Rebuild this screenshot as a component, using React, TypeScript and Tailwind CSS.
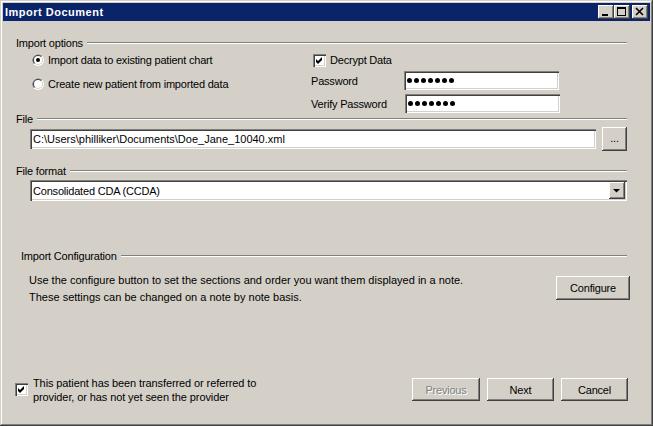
import React from 'react';

const raised =
  'bg-[#d4d0c8] shadow-[inset_-1px_-1px_#404040,inset_1px_1px_#ffffff,inset_-2px_-2px_#808080,inset_2px_2px_#d4d0c8]';
const sunken =
  'bg-white shadow-[inset_1px_1px_#808080,inset_2px_2px_#404040,inset_-1px_-1px_#ffffff,inset_-2px_-2px_#d4d0c8]';

const Radio = ({ checked }: { checked?: boolean }) => (
  <svg width="12" height="12" viewBox="0 0 12 12" className="shrink-0">
    <circle cx="6" cy="6" r="6" fill="#ffffff" />
    <path d="M1.76 10.24 A6 6 0 0 1 10.24 1.76 Z" fill="#808080" />
    <circle cx="6" cy="6" r="5" fill="#d4d0c8" />
    <path d="M2.46 9.54 A5 5 0 0 1 9.54 2.46 Z" fill="#404040" />
    <circle cx="6" cy="6" r="4" fill="#ffffff" />
    {checked && <circle cx="6" cy="6" r="2" fill="#000000" />}
  </svg>
);

const Checkbox = ({ checked }: { checked?: boolean }) => (
  <div className={`w-[13px] h-[13px] shrink-0 flex items-center justify-center ${sunken}`}>
    {checked && (
      <svg width="13" height="13" viewBox="0 0 13 13">
        <path d="M3 5 L5 7 L9 3 L9 6 L5 10 L3 8 Z" fill="#000000" />
      </svg>
    )}
  </div>
);

const GroupHeader = ({ label, className = '' }: { label: string; className?: string }) => (
  <div className={`flex items-center h-[12px] ${className}`}>
    <span className="whitespace-nowrap">{label}</span>
    <div className="flex-1 ml-[4px] h-[2px] border-t border-b border-t-[#808080] border-b-white" />
  </div>
);

const Dots = () => (
  <div className="flex gap-[2px] pl-[3px]">
    {[0, 1, 2, 3, 4, 5, 6].map((i) => (
      <span key={i} className="w-[5px] h-[5px] rounded-full bg-black" />
    ))}
  </div>
);

export default function App() {
  return (
    <div className="w-[653px] h-[426px] bg-[#d4d0c8] p-[3px] shadow-[inset_-1px_-1px_#404040,inset_1px_1px_#d4d0c8,inset_-2px_-2px_#808080,inset_2px_2px_#ffffff] font-['Liberation_Sans',Arial,sans-serif] text-[11px] leading-[14px] text-black tracking-[-0.2px] overflow-hidden">
      {/* Title bar */}
      <div className="h-[18px] bg-[#0a246a] flex items-center pl-[2px] pr-[2px]">
        <span className="text-white font-bold tracking-[0.5px]">Import Document</span>
        <div className="ml-auto flex items-center">
          <div className={`w-[16px] h-[14px] ${raised}`}>
            <svg width="16" height="14" viewBox="0 0 16 14">
              <rect x="4" y="9" width="6" height="2" fill="#000" />
            </svg>
          </div>
          <div className={`w-[16px] h-[14px] ${raised}`}>
            <svg width="16" height="14" viewBox="0 0 16 14">
              <rect x="3.5" y="2.5" width="8" height="8" fill="none" stroke="#000" />
              <rect x="3" y="2" width="9" height="2" fill="#000" />
            </svg>
          </div>
          <div className={`w-[16px] h-[14px] ml-[2px] ${raised}`}>
            <svg width="16" height="14" viewBox="0 0 16 14">
              <path d="M4 3 L11 10 M11 3 L4 10" stroke="#000" strokeWidth="1.6" />
            </svg>
          </div>
        </div>
      </div>

      {/* Content */}
      <div className="pl-[13px] pr-[23px]">
        {/* Import options */}
        <GroupHeader label="Import options" className="mt-[16px]" />
        <div className="flex mt-[4px]">
          <div className="w-[295px] pl-[16px]">
            <div className="flex items-center gap-[4px] h-[14px]">
              <Radio checked />
              <span>Import data to existing patient chart</span>
            </div>
            <div className="flex items-center gap-[4px] h-[14px] mt-[10px]">
              <Radio />
              <span>Create new patient from imported data</span>
            </div>
          </div>
          <div>
            <div className="flex items-center gap-[4px] h-[14px] pl-[2px]">
              <Checkbox checked />
              <span>Decrypt Data</span>
            </div>
            <div className="flex items-center h-[19px] mt-[4px]">
              <span className="w-[93px]">Password</span>
              <div className={`w-[155px] h-[19px] flex items-center ${sunken}`}>
                <Dots />
              </div>
            </div>
            <div className="flex items-center h-[19px] mt-[4px]">
              <span className="w-[94px]">Verify Password</span>
              <div className={`w-[155px] h-[19px] flex items-center ${sunken}`}>
                <Dots />
              </div>
            </div>
          </div>
        </div>

        {/* File */}
        <GroupHeader label="File" />
        <div className="flex items-center h-[24px] mt-[2px] pl-[14px] gap-[6px]">
          <div className={`flex-1 h-[20px] flex items-center pl-[3px] tracking-normal ${sunken}`}>
            C:\Users\philliker\Documents\Doe_Jane_10040.xml
          </div>
          <button className={`w-[25px] h-[24px] flex items-center justify-center pb-[3px] ${raised}`}>
            ...
          </button>
        </div>

        {/* File format */}
        <GroupHeader label="File format" className="mt-[14px]" />
        <div className={`ml-[14px] mt-[3px] h-[21px] flex items-center pl-[3px] pr-[2px] ${sunken}`}>
          <span>Consolidated CDA (CCDA)</span>
          <div className={`ml-auto w-[16px] h-[17px] flex items-center justify-center ${raised}`}>
            <svg width="16" height="17" viewBox="0 0 16 17">
              <path d="M4 7 L11 7 L7.5 10.5 Z" fill="#000" />
            </svg>
          </div>
        </div>

        {/* Import Configuration */}
        <GroupHeader label="Import Configuration" className="mt-[49px] ml-[5px]" />
        <div className="flex mt-[11px]">
          <div className="pl-[13px] tracking-normal">
            <div className="h-[14px]">
              Use the configure button to set the sections and order you want them displayed in a note.
            </div>
            <div className="h-[14px] mt-[3px]">These settings can be changed on a note by note basis.</div>
          </div>
          <button className={`ml-auto -mr-[3px] mt-[3px] w-[74px] h-[24px] ${raised}`}>Configure</button>
        </div>

        {/* Bottom */}
        <div className="flex mt-[72px]">
          <div className="-ml-[1px] mt-[7px]">
            <Checkbox checked />
          </div>
          <div className="ml-[5px] tracking-[-0.1px]">
            <div>This patient has been transferred or referred to</div>
            <div>provider, or has not yet seen the provider</div>
          </div>
          <div className="ml-auto -mr-[1px] mt-[2px] flex gap-[7px]">
            <button className={`w-[68px] h-[23px] text-[#808080] [text-shadow:1px_1px_0_#ffffff] ${raised}`}>
              Previous
            </button>
            <button className={`w-[67px] h-[23px] ${raised}`}>Next</button>
            <button className={`w-[67px] h-[23px] ${raised}`}>Cancel</button>
          </div>
        </div>
      </div>
    </div>
  );
}
